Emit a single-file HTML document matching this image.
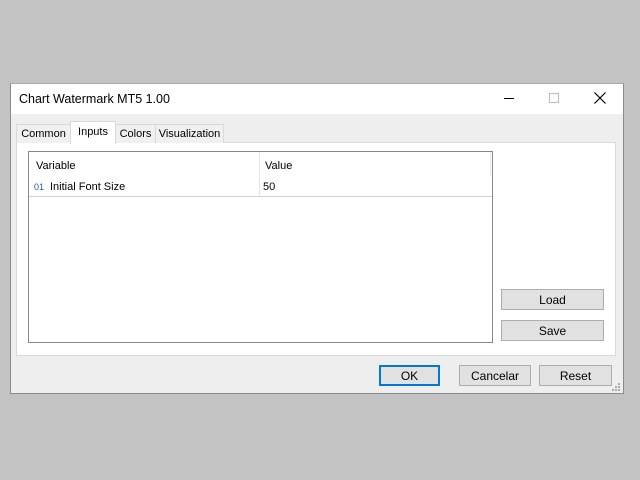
<!DOCTYPE html>
<html><head><style>
body{margin:0;width:640px;height:480px;background:#c3c3c3;position:relative;font-family:"Liberation Sans",sans-serif;font-size:11px;color:#000;overflow:hidden}
.a{position:absolute;box-sizing:border-box}
.btn{position:absolute;box-sizing:border-box;background:#e1e1e1;border:1px solid #adadad;text-align:center;line-height:21px;font-size:12px}
.tab{position:absolute;box-sizing:border-box;border:1px solid #d9d9d9;border-bottom:none;background:#f0f0f0;text-align:center;line-height:18px}
</style></head><body>
<div class="a" style="left:10px;top:83px;width:614px;height:311px;background:#eeeeee;border:1px solid #8a8a8a;border-top-color:#aaa"></div>
<div class="a" style="left:11px;top:84px;width:612px;height:30px;background:#fff"></div>
<div class="a" style="left:19px;top:92px;font-size:12.5px">Chart Watermark MT5 1.00</div>
<div class="a" style="left:504px;top:98px;width:10px;height:1px;background:#000"></div>
<div class="a" style="left:549px;top:93px;width:10px;height:10px;border:1px solid #bbb"></div>
<svg class="a" style="left:594px;top:92px" width="12" height="12"><path d="M0.5 0.5L11.5 11.5M11.5 0.5L0.5 11.5" stroke="#000" stroke-width="1.2"/></svg>
<div class="a" style="left:16px;top:142px;width:600px;height:214px;background:#fff;border:1px solid #d9d9d9"></div>
<div class="tab" style="left:16px;top:124px;width:55px;height:19px;line-height:19px">Common</div>
<div class="tab" style="left:115px;top:124px;width:41px;height:19px;line-height:19px">Colors</div>
<div class="tab" style="left:155px;top:124px;width:69px;height:19px;line-height:19px">Visualization</div>
<div class="tab" style="left:70px;top:121px;width:46px;height:23px;background:#fff;line-height:20px">Inputs</div>
<div class="a" style="left:28px;top:151px;width:465px;height:192px;border:1px solid #828790;background:#fff"></div>
<div class="a" style="left:259px;top:152px;width:1px;height:44px;background:#e5e5e5"></div>
<div class="a" style="left:29px;top:196px;width:463px;height:1px;background:#d0d0d0"></div>
<div class="a" style="left:490px;top:152px;width:1px;height:24px;background:#e5e5e5"></div>
<div class="a" style="left:36px;top:160px">Variable</div>
<div class="a" style="left:265px;top:160px">Value</div>
<div class="a" style="left:34px;top:182px;font-size:9px;color:#2a5b9a">01</div>
<div class="a" style="left:50px;top:181px">Initial Font Size</div>
<div class="a" style="left:263px;top:181px">50</div>
<div class="btn" style="left:501px;top:289px;width:103px;height:21px">Load</div>
<div class="btn" style="left:501px;top:320px;width:103px;height:21px">Save</div>
<div class="btn" style="left:379px;top:365px;width:61px;height:21px;border:2px solid #0078d7;line-height:19px">OK</div>
<div class="btn" style="left:459px;top:365px;width:72px;height:21px">Cancelar</div>
<div class="btn" style="left:539px;top:365px;width:73px;height:21px">Reset</div>
<svg class="a" style="left:612px;top:383px" width="10" height="10" fill="#aaa"><rect x="6" y="0" width="2" height="2"/><rect x="3" y="3" width="2" height="2"/><rect x="6" y="3" width="2" height="2"/><rect x="0" y="6" width="2" height="2"/><rect x="3" y="6" width="2" height="2"/><rect x="6" y="6" width="2" height="2"/></svg>
</body></html>
